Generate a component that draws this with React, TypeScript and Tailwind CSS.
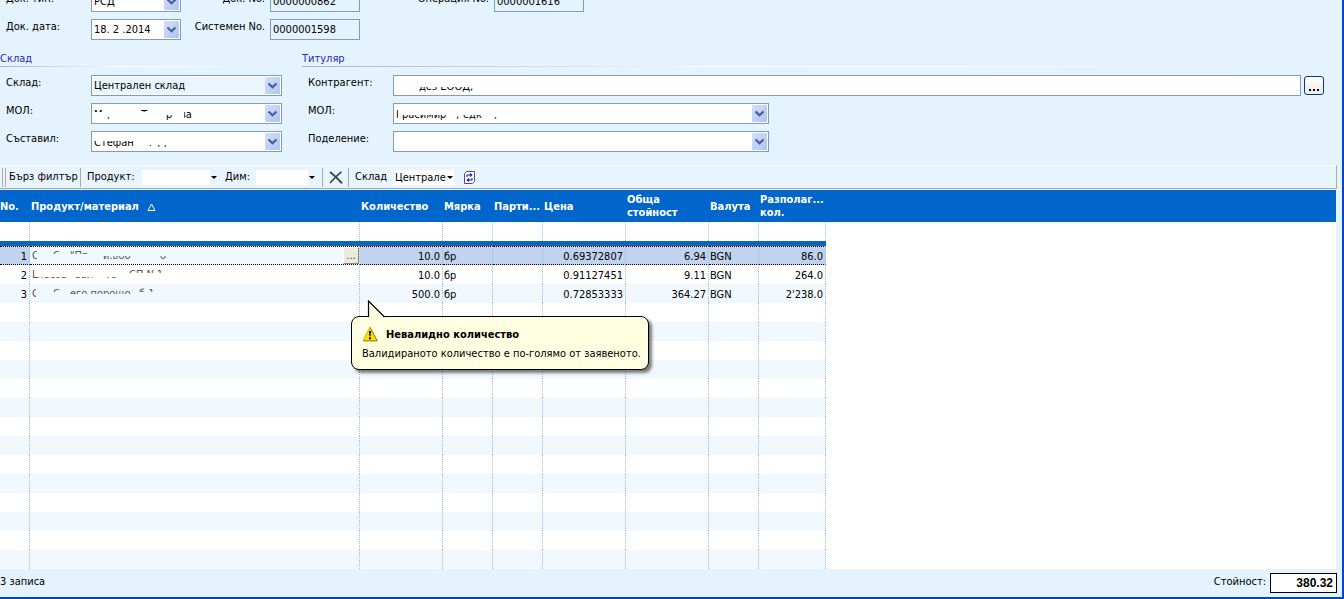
import type { ReactNode } from "react";

type Fragment = { text: string; width: string; clip: string };

const TOP = "[clip-path:inset(0_0_8px_0)]";
const BOTTOM = "[clip-path:inset(7px_0_0_0)]";
const LOWER = "[clip-path:inset(5px_0_0_0)]";
const BASE = "[clip-path:inset(9px_0_0_0)]";
const CAP = "[clip-path:inset(0_0_9px_0)]";
const MIDDLE = "[clip-path:inset(4px_0_6px_0)]";
const FULL = "";

function Remnants({ parts }: { parts: Fragment[] }) {
  return (
    <span className="flex leading-[13px] whitespace-nowrap">
      {parts.map((p, i) => (
        <span key={i} className={`block shrink-0 overflow-hidden ${p.width} ${p.clip}`}>
          {p.text}
        </span>
      ))}
    </span>
  );
}

function DropArrow() {
  return (
    <svg className="pointer-events-none absolute top-0.5 right-0.5" width="15" height="17" viewBox="0 0 15 17" aria-hidden="true">
      <defs>
        <linearGradient id="drop" x1="0" y1="0" x2="1" y2="1">
          <stop offset="0" stopColor="#d3e0fd" />
          <stop offset="1" stopColor="#adc3f3" />
        </linearGradient>
      </defs>
      <rect width="15" height="17" rx="1" fill="url(#drop)" />
      <path d="M3.5 6.5 L7.5 10.3 L11.5 6.5" fill="none" stroke="#46608c" strokeWidth="2.2" />
    </svg>
  );
}

function SelectField({ id, value = "", tinted = false, parts }: { id: string; value?: string; tinted?: boolean; parts?: Fragment[] }) {
  return (
    <div className="relative h-[21px] w-full">
      <select
        id={id}
        className={`block h-full w-full appearance-none border border-[#7f9db9] pl-0.5 leading-[17px] outline-none ${tinted ? "bg-[#eaf5fe] shadow-[inset_0_0_0_1px_#fff]" : "bg-white"}`}
      >
        <option>{value}</option>
      </select>
      {parts && (
        <div className="pointer-events-none absolute top-[5px] left-[3px]">
          <Remnants parts={parts} />
        </div>
      )}
      <DropArrow />
    </div>
  );
}

function ReadOnly({ id, value }: { id: string; value: string }) {
  return <input id={id} readOnly defaultValue={value} className="h-[21px] w-full border border-[#7f9db9] bg-transparent px-0.5 outline-none" />;
}

function Label({ id, children, right = false }: { id: string; children: ReactNode; right?: boolean }) {
  return (
    <label htmlFor={id} className={`leading-[15px] whitespace-nowrap ${right ? "pr-[5px] text-right" : ""}`}>
      {children}
    </label>
  );
}

function GroupTitle({ children }: { children: ReactNode }) {
  return (
    <h2 className="flex flex-col text-[#1c2fb5]">
      <span className="leading-[14px]">{children}</span>
      <span className="h-px bg-linear-to-r from-[#a9b4c2] via-[#f6fbff] via-40% to-[#e3f2fd]" />
    </h2>
  );
}

function Separator() {
  return <span className="h-[19px] w-px shrink-0 bg-[#a3abb3]" />;
}

function Caret() {
  return (
    <svg className="mx-px shrink-0" width="6" height="3" viewBox="0 0 6 3" aria-hidden="true">
      <path d="M0 0 H6 L3 3 Z" fill="#000" />
    </svg>
  );
}

const headers = [["No."], ["Продукт/материал"], ["Количество"], ["Мярка"], ["Парти..."], ["Цена"], ["Обща", "стойност"], ["Валута"], ["Разполаг...", "кол."]];
const widths = ["w-[30px]", "w-[330px]", "w-[83px]", "w-[50px]", "w-[50px]", "w-[83px]", "w-[83px]", "w-[50px]", "w-[67px]"];
const rightAligned = [true, false, true, false, false, true, true, false, true];

const rows: { cells: string[]; parts: Fragment[] }[] = [
  {
    cells: ["1", "", "10.0", "бр", "", "0.69372807", "6.94", "BGN", "86.0"],
    parts: [
      { text: "С", width: "w-[5px]", clip: FULL },
      { text: "", width: "w-[16px]", clip: FULL },
      { text: "С", width: "w-[17px]", clip: TOP },
      { text: "\"Пр", width: "w-[33px]", clip: TOP },
      { text: "и.воо", width: "w-[57px]", clip: BOTTOM },
      { text: "о", width: "w-[8px]", clip: BOTTOM },
    ],
  },
  {
    cells: ["2", "", "10.0", "бр", "", "0.91127451", "9.11", "BGN", "264.0"],
    parts: [
      { text: "L", width: "w-[5px]", clip: FULL },
      { text: "лесов", width: "w-[38px]", clip: BASE },
      { text: "вал", width: "w-[30px]", clip: BASE },
      { text: "то", width: "w-[24px]", clip: BASE },
      { text: "СП №1", width: "w-[40px]", clip: TOP },
    ],
  },
  {
    cells: ["3", "", "500.0", "бр", "", "0.72853333", "364.27", "BGN", "2'238.0"],
    parts: [
      { text: "С", width: "w-[4px]", clip: FULL },
      { text: "", width: "w-[17px]", clip: FULL },
      { text: "С", width: "w-[17px]", clip: TOP },
      { text: "его порошо", width: "w-[69px]", clip: MIDDLE },
      { text: "б 1", width: "w-[20px]", clip: TOP },
    ],
  },
];

const emptyRows = Array.from({ length: 14 }, (_, i) => i);
const cellLine = "border-r border-dotted border-r-[#9dbfdf]";

function Grid() {
  return (
    <table className="w-full table-fixed border-separate border-spacing-0 bg-white">
      <colgroup>
        {widths.map((w, i) => (
          <col key={i} className={w} />
        ))}
        <col />
      </colgroup>
      <thead>
        <tr className="h-8 bg-[#0066cc] text-left leading-[13px] text-white">
          {headers.map((lines, i) => (
            <th key={lines[0]} scope="col" className={`p-0 align-middle font-bold whitespace-nowrap ${i === 0 ? "" : "pl-px"}`}>
              {lines.map((line) => (
                <span key={line} className="block">
                  {line}
                  {i === 1 && (
                    <svg className="ml-2 inline-block align-[-1px]" width="9" height="8" viewBox="0 0 9 8" aria-hidden="true">
                      <path d="M1 7.5 L4.5 1 L8 7.5 Z" fill="none" stroke="#fff" />
                    </svg>
                  )}
                </span>
              ))}
            </th>
          ))}
          <th className="p-0" />
        </tr>
      </thead>
      <tbody>
        <tr className="h-[19px]">
          {widths.map((_, i) => (
            <td key={i} className={`p-0 ${cellLine}`} />
          ))}
          <td className="p-0" />
        </tr>
        <tr className="h-[5px]">
          <td colSpan={9} className="border-b border-[#2f6092] bg-[#0a66ba] p-0" />
          <td className="p-0" />
        </tr>
        {rows.map((row, r) => (
          <tr key={r} className="h-[19px] leading-[13px]">
            {row.cells.map((c, i) => {
              const selected = r === 0;
              const fill = selected && i !== 1 ? "bg-[#c1d2ee]" : r === 1 ? "bg-white" : "bg-[#f2f9fe]";
              return (
                <td
                  key={i}
                  className={`px-0 pb-0 align-middle whitespace-nowrap ${i === 1 ? "pt-0" : "pt-0.5"} ${cellLine} ${fill} ${rightAligned[i] ? "pr-0.5 text-right" : "pl-px"} ${selected ? "border-y border-y-black" : ""}`}
                >
                  {i === 1 ? (
                    <div className="flex h-[17px] items-center justify-between pl-px text-[#555]">
                      <Remnants parts={row.parts} />
                      {selected && (
                        <button
                          type="button"
                          aria-label="Избор на продукт"
                          className="h-[17px] w-4 shrink-0 border border-t-white border-r-[#8a887c] border-b-[#8a887c] border-l-white bg-[#ece9d8] leading-[13px] text-[#444]"
                        >
                          ...
                        </button>
                      )}
                    </div>
                  ) : (
                    c
                  )}
                </td>
              );
            })}
            <td className="p-0" />
          </tr>
        ))}
        {emptyRows.map((n) => (
          <tr key={n} className="h-[19px]">
            {widths.map((_, i) => (
              <td key={i} className={`p-0 ${cellLine} ${n % 2 ? "bg-[#f2f9fe]" : "bg-white"}`} />
            ))}
            <td className="p-0" />
          </tr>
        ))}
      </tbody>
    </table>
  );
}

function Balloon() {
  return (
    <div role="alert" className="absolute top-[126px] left-[351px] w-[298px] rounded-lg border border-black bg-[#ffffe1] px-2.5 pt-2 pb-2 shadow-[3px_3px_3px_rgba(0,0,0,0.5)]">
      <svg className="absolute -top-[17px] left-[15px]" width="20" height="19" viewBox="0 0 20 19" aria-hidden="true">
        <path d="M1.5 18.5 V1 L17.5 17.5 L18 19 H1 Z" fill="#ffffe1" />
        <path d="M1.5 17 V1 L17.5 17" fill="none" stroke="#000" strokeWidth="1.2" />
      </svg>
      <div className="flex items-center gap-2">
        <svg width="16" height="16" viewBox="0 0 16 16" aria-hidden="true">
          <path d="M8 1.2 L15 14.6 H1 Z" fill="#ffe100" stroke="#d9b400" strokeLinejoin="round" />
          <path d="M8 1.5 L15.4 15 H1.5" fill="none" stroke="#7d6a14" strokeWidth="0.7" />
          <path d="M6.9 5 H9.1 L8.6 10.3 H7.4 Z" fill="#111" />
          <rect x="7" y="11.3" width="2" height="2" fill="#111" />
        </svg>
        <strong className="pt-0.5 leading-4">Невалидно количество</strong>
      </div>
      <p className="mt-[3px] leading-[15px] whitespace-nowrap">Валидираното количество е по-голямо от заявеното.</p>
    </div>
  );
}

export default function App() {
  return (
    <div className="flex min-h-screen flex-col overflow-hidden border-r-2 border-b-2 border-[#0046d5] bg-[#e4f3fd] font-['DejaVu_Sans_Condensed','DejaVu_Sans',sans-serif] text-[11px] text-black">
      <form className="overflow-hidden pb-[13px]">
        <div className="-mt-[9px] grid grid-cols-[85px_90px_89px_90px_134px_90px] gap-y-[7px] pl-1.5">
          <Label id="type">Док. тип:</Label>
          <SelectField id="type" value="РСД" />
          <Label id="docno" right>Док. No.</Label>
          <ReadOnly id="docno" value="0000000862" />
          <Label id="opno" right>Операция No.</Label>
          <ReadOnly id="opno" value="0000001616" />
          <Label id="date">Док. дата:</Label>
          <div className="relative h-[21px]">
            <input id="date" defaultValue="18. 2 .2014" className="h-full w-full border border-[#7f9db9] bg-white px-0.5 outline-none" />
            <DropArrow />
          </div>
          <Label id="sysno" right>Системен No.</Label>
          <ReadOnly id="sysno" value="0000001598" />
        </div>

        <div className="mt-3 flex gap-5">
          <section className="w-[282px] shrink-0">
            <GroupTitle>Склад</GroupTitle>
            <div className="mt-2 grid grid-cols-[85px_1fr] gap-y-[7px] pl-1.5">
              <Label id="store">Склад:</Label>
              <SelectField id="store" value="Централен склад" tinted />
              <Label id="mol1">МОЛ:</Label>
              <SelectField
                id="mol1"
                parts={[
                  { text: "М", width: "w-[13px]", clip: CAP },
                  { text: ",", width: "w-[34px]", clip: BASE },
                  { text: "Т", width: "w-[25px]", clip: CAP },
                  { text: "р", width: "w-[14px]", clip: BOTTOM },
                  { text: "ва", width: "w-[14px]", clip: "[clip-path:inset(0_0_0_4px)]" },
                ]}
              />
              <Label id="author">Съставил:</Label>
              <SelectField
                id="author"
                parts={[
                  { text: "Стефан", width: "w-[55px]", clip: LOWER },
                  { text: "г , ,", width: "w-[20px]", clip: BASE },
                ]}
              />
            </div>
          </section>

          <section className="min-w-0 flex-1 pr-[18px]">
            <GroupTitle>Титуляр</GroupTitle>
            <div className="mt-2 grid grid-cols-[85px_1fr] gap-y-[7px] pl-1.5">
              <Label id="client">Контрагент:</Label>
              <div className="flex items-center gap-[3px]">
                <div className="relative h-[21px] flex-1">
                  <input id="client" className="h-full w-full border border-[#7f9db9] bg-white px-[3px] outline-none" />
                  <div className="pointer-events-none absolute top-[5px] left-[26px]">
                    <Remnants parts={[{ text: "дез ЕООД,", width: "w-[56px]", clip: BOTTOM }]} />
                  </div>
                </div>
                <button type="button" aria-label="Избор на контрагент" className="flex h-[19px] w-5 items-end justify-center gap-0.5 rounded-[3px] border border-[#003c74] bg-linear-to-b from-white to-[#ecebe6] pb-[3px]">
                  <span className="size-0.5 bg-black" />
                  <span className="size-0.5 bg-black" />
                  <span className="size-0.5 bg-black" />
                </button>
              </div>
              <Label id="mol2">МОЛ:</Label>
              <div className="w-[376px]">
                <SelectField
                  id="mol2"
                  parts={[
                    { text: "К", width: "w-[2px]", clip: FULL },
                    { text: "", width: "w-1", clip: FULL },
                    { text: "расимир", width: "w-[54px]", clip: BOTTOM },
                    { text: ",", width: "w-[7px]", clip: BOTTOM },
                    { text: "едк", width: "w-[31px]", clip: BOTTOM },
                    { text: ",", width: "w-[5px]", clip: BASE },
                  ]}
                />
              </div>
              <Label id="unit">Поделение:</Label>
              <div className="w-[376px]">
                <SelectField id="unit" />
              </div>
            </div>
          </section>
        </div>
      </form>

      <div role="toolbar" className="mr-[5px] flex h-6 items-center border-t border-r border-b border-t-white border-r-[#a9adb0] border-b-[#aaa8ae] bg-[#e8f5ff] whitespace-nowrap">
        <span className="ml-0.5 flex gap-0.5">
          <Separator />
          <Separator />
        </span>
        <span className="w-[74px] pl-[3px]">Бърз филтър</span>
        <Separator />
        <label htmlFor="fproduct" className="w-[61px] pl-[6px]">Продукт:</label>
        <input id="fproduct" className="h-[15px] w-[68px] bg-white outline-none" />
        <Caret />
        <label htmlFor="fdim" className="w-[38px] pl-[7px]">Дим:</label>
        <input id="fdim" className="h-[15px] w-[52px] bg-white outline-none" />
        <Caret />
        <span className="w-1.5" />
        <Separator />
        <button type="button" aria-label="Изчисти" className="flex w-[25px] justify-center">
          <svg width="14" height="13" viewBox="0 0 14 13" aria-hidden="true">
            <path d="M1 1 C5 4 9 8 13 12.3" fill="none" stroke="#3d4248" strokeWidth="1.9" />
            <path d="M12.5 0.8 C8 4 5 8 1 12" fill="none" stroke="#3d4248" strokeWidth="1.6" />
          </svg>
        </button>
        <Separator />
        <label htmlFor="fstore" className="w-[45px] pl-[6px]">Склад</label>
        <select id="fstore" className="h-[15px] w-[52px] appearance-none overflow-hidden bg-white pl-px outline-none">
          <option>Централе</option>
        </select>
        <span className="flex h-[15px] items-center bg-white">
          <Caret />
        </span>
        <button type="button" aria-label="Обнови" className="ml-[10px]">
          <svg width="11" height="13" viewBox="0 0 11 13" aria-hidden="true">
            <path d="M2.5 0.5 H10.5 V10.5 L8.5 12.5 H0.5 V2.5 Z" fill="#fff" stroke="#4a4f86" />
            <path d="M3 6 V4 H7 M6 2.3 L7.8 4 L6 5.7 M8 7 V9 H4 M5 7.3 L3.2 9 L5 10.7" fill="none" stroke="#1414c8" strokeWidth="1.1" />
          </svg>
        </button>
      </div>

      <main className="relative mt-px mr-1.5 flex-1 bg-white">
        <Grid />
        <Balloon />
      </main>

      <footer className="flex h-7 items-start pr-[5px]">
        <span className="pt-1.5 leading-[13px]">3 записа</span>
        <label htmlFor="total" className="ml-auto pt-1.5 pr-1 leading-[13px]">Стойност:</label>
        <input
          id="total"
          readOnly
          defaultValue="380.32"
          className="mt-1 h-5 w-[67px] border border-black bg-white pr-[3px] text-right font-['Liberation_Sans',sans-serif] text-[12px] font-bold outline-none"
        />
      </footer>
    </div>
  );
}
